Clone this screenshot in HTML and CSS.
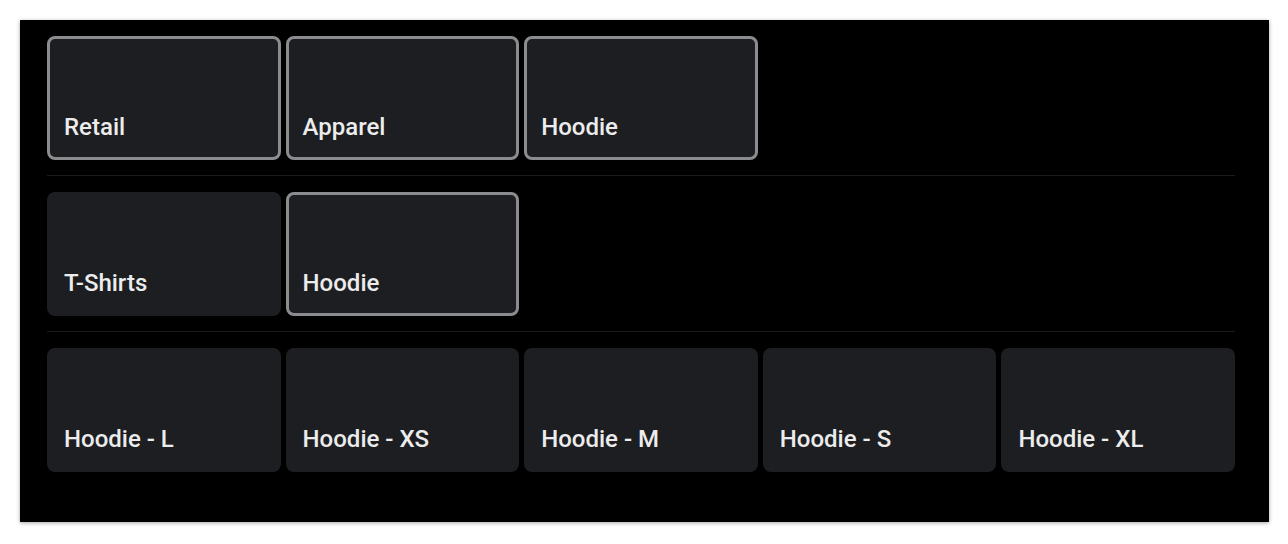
FILE: index.html
```html
<!DOCTYPE html>
<html lang="en">
  <head>
    <meta charset="UTF-8" />
    <meta name="viewport" content="width=device-width, initial-scale=1.0" />
    <title>Category Picker</title>
    <link rel="stylesheet" href="styles.css">
  </head>
  <body>
    <div class="picker-panel">
      <div class="picker-row">
        <div class="tile tile-selected">Retail</div>
        <div class="tile tile-selected">Apparel</div>
        <div class="tile tile-selected">Hoodie</div>
      </div>
      <div class="picker-row">
        <div class="tile">T-Shirts</div>
        <div class="tile tile-selected">Hoodie</div>
      </div>
      <div class="picker-row">
        <div class="tile">Hoodie - L</div>
        <div class="tile">Hoodie - XS</div>
        <div class="tile">Hoodie - M</div>
        <div class="tile">Hoodie - S</div>
        <div class="tile">Hoodie - XL</div>
      </div>
    </div>
  </body>
</html>
```

FILE: styles.css
```css
body {
  margin: 0;
  padding: 20px;
  background-color: #fff;
  font-family: Roboto, "Liberation Sans", Arial, sans-serif;
}
.picker-panel {
  width: 1249px;
  height: 502px;
  box-sizing: border-box;
  padding: 16px 34px 50px 27px;
  background-color: #000;
  box-shadow: 0 1px 4px rgba(0, 0, 0, 0.35);
}
.picker-row {
  display: grid;
  grid-template-columns: repeat(5, 1fr);
  column-gap: 5px;
  padding-bottom: 15px;
  border-bottom: 1px solid #1c1c1e;
  margin-bottom: 16px;
}
.picker-row:last-child {
  border-bottom: none;
  padding-bottom: 0;
  margin-bottom: 0;
}
.tile {
  height: 124px;
  box-sizing: border-box;
  display: flex;
  align-items: flex-end;
  padding: 0 14px 16px;
  border: 3px solid transparent;
  border-radius: 8px;
  background-color: #1c1e22;
  color: #ececec;
  font-size: 24px;
  font-weight: 500;
}
.tile-selected {
  border-color: #8b8c8e;
}
```
